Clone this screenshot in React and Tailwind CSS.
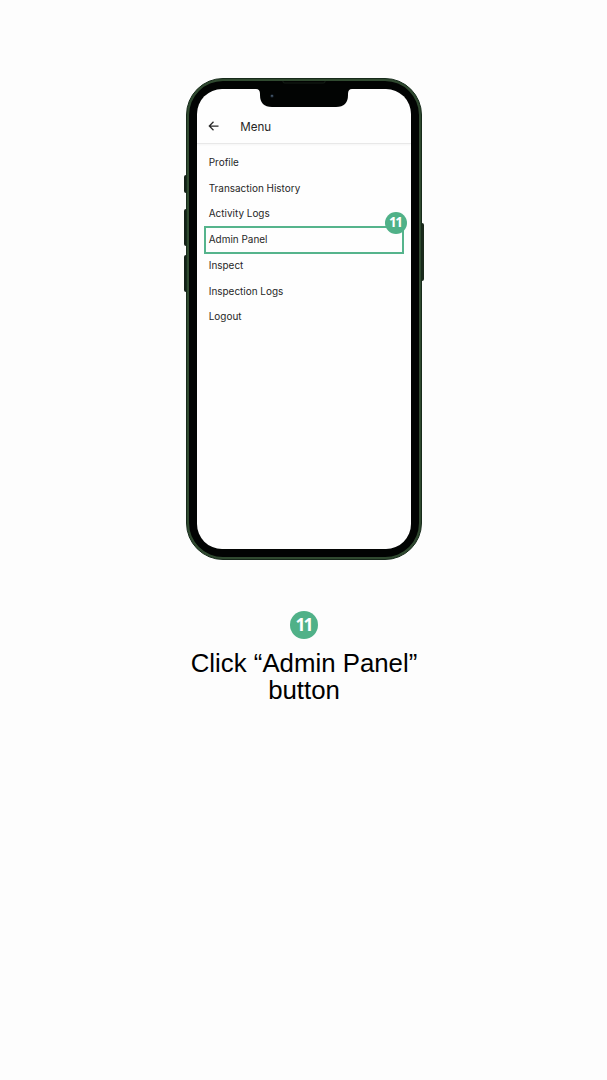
const items = ["Profile", "Transaction History", "Activity Logs", "Admin Panel", "Inspect", "Inspection Logs", "Logout"];

function MenuItem({ label }) {
  if (label !== "Admin Panel") {
    return <li className="flex h-[25.75px] items-center pl-[11.5px]">{label}</li>;
  }
  return (
    <li className="relative mr-[7px] -mb-[1.25px] -mt-px ml-[7px] flex h-[28px] items-center border-2 border-[#55b48c] pl-[2.5px]">
      {label}
      <span className="absolute -top-4 -right-[5px] flex size-[22px] items-center justify-center rounded-full bg-[#50b188] pr-px font-['Open_Sans',sans-serif] text-[13.5px] leading-none font-bold tracking-[-1.5px] text-white">
        11
      </span>
    </li>
  );
}

function Screen() {
  return (
    <div className="h-full rounded-[25px] bg-[#fefefe] font-['Inter',sans-serif] text-[#262626]">
      <header className="flex h-[55px] items-end border-b border-[#e8e8e8] pb-[8px] pl-[11px] shadow-[0_1px_2px_rgba(0,0,0,0.04)]">
        <svg className="mb-[3px] h-[12px] w-[12px]" viewBox="0 0 12 12" fill="none" stroke="#292929" strokeWidth="1.25">
          <path d="M10.5 6H1.5M5.5 1.8L1.3 6l4.2 4.2" />
        </svg>
        <h1 className="ml-[20px] text-[11.6px] leading-[16px]">Menu</h1>
      </header>
      <ul className="pt-[5.5px] text-[9.95px]">
        {items.map((label) => (
          <MenuItem key={label} label={label} />
        ))}
      </ul>
    </div>
  );
}

function Phone() {
  return (
    <div className="flex h-[482px]">
      <div className="flex w-[2px] flex-col pt-[97px]">
        <span className="h-[18px] rounded-l-sm bg-[#142117]" />
        <span className="mt-4 h-[37px] rounded-l-sm bg-[#142117]" />
        <span className="mt-[9px] h-[37px] rounded-l-sm bg-[#142117]" />
      </div>
      <div className="relative w-[235.5px] rounded-[37px] border border-[#172a1b] bg-[#304a30] p-[2px]">
        <div className="h-full rounded-[34px] bg-[#020403] p-[8px]">
          <Screen />
        </div>
        <svg className="absolute top-[2px] left-[69px] h-[28px] w-[96px]" viewBox="0 0 96 28">
          <path d="M0 0H96V8Q92 8 92 13V14Q92 26 80 26H16Q4 26 4 14V13Q4 8 0 8Z" fill="#020403" />
          <path d="M27 0v1q0 1 2 1h38q2 0 2-1V0" fill="none" stroke="#1d2920" strokeWidth="0.7" />
          <circle cx="16" cy="15" r="1.8" fill="#17202a" />
          <circle cx="16" cy="14.8" r="0.9" fill="#53687d" />
        </svg>
      </div>
      <div className="w-[2px] pt-[145px]">
        <div className="h-[58px] rounded-r-sm bg-[#1b2a1c]" />
      </div>
    </div>
  );
}

export default function App() {
  return (
    <main className="flex min-h-screen flex-col items-center gap-[51px] bg-[#fdfdfd] pt-[78px] pl-px">
      <Phone />
      <section className="flex flex-col items-center gap-[11px]">
        <div className="flex size-[28px] items-center justify-center rounded-full bg-[#50b188] pr-px font-['Open_Sans',sans-serif] text-[17.5px] leading-none font-bold tracking-[-2px] text-white">
          11
        </div>
        <p className="text-center font-['Liberation_Sans',Arial,sans-serif] text-[25.8px] leading-[27px] text-black">
          Click “Admin Panel”
          <br />
          button
        </p>
      </section>
    </main>
  );
}
